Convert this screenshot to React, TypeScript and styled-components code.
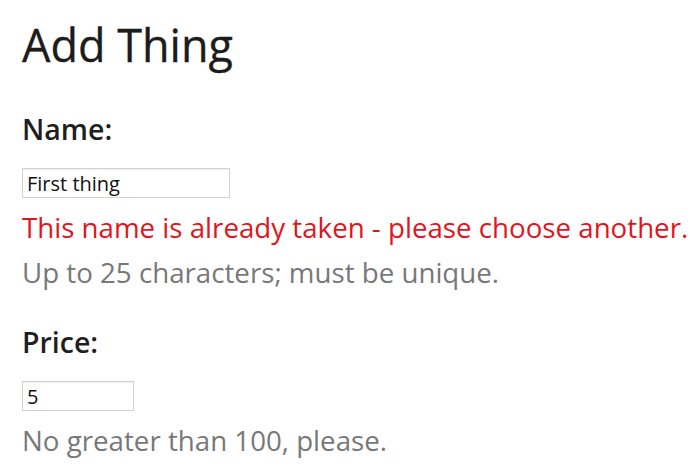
import React, { useState } from 'react'
import styled, { createGlobalStyle } from 'styled-components'

const GlobalStyle = createGlobalStyle`
  html, body {
    margin: 0;
    padding: 0;
    background: #ffffff;
  }
  body {
    font-family: 'Open Sans', 'Noto Sans', sans-serif;
    color: #1f1f1f;
  }
`

const Form = styled.form`
  display: flex;
  flex-direction: column;
  align-items: flex-start;
  padding: 14px 0 0 22px;
`

const Title = styled.h1`
  margin: 0 0 34px;
  font-size: 45px;
  font-weight: 400;
  line-height: 62px;
  color: #1c1c1c;
  -webkit-text-stroke: 0.3px #1c1c1c;
`

const Field = styled.div`
  display: flex;
  flex-direction: column;
  align-items: flex-start;
  margin-bottom: 28px;
`

const Label = styled.label`
  font-size: 28.5px;
  font-weight: 600;
  line-height: 38px;
  margin-bottom: 20px;
  color: #1f1f1f;
`

const Input = styled.input<{ $width: number }>`
  box-sizing: border-box;
  width: ${({ $width }) => $width}px;
  height: 30px;
  margin: 0 0 7px;
  padding: 0 4px;
  border: 1px solid #d2d2d2;
  box-shadow: inset 0 1px 1px rgba(0, 0, 0, 0.06);
  font-family: 'Open Sans', 'Noto Sans', sans-serif;
  font-size: 20px;
  color: #111;
  outline: none;
`

const Message = styled.p<{ $error?: boolean }>`
  margin: 0;
  font-size: 27.7px;
  line-height: 45px;
  color: ${({ $error }) => ($error ? '#e2141c' : '#787878')};
`

export default function App() {
  const [name, setName] = useState('First thing')
  const [price, setPrice] = useState('5')

  return (
    <>
      <GlobalStyle />
      <Form onSubmit={(e) => e.preventDefault()}>
        <Title>Add Thing</Title>
        <Field>
          <Label htmlFor="name">Name:</Label>
          <Input id="name" $width={208} value={name} onChange={(e) => setName(e.target.value)} />
          <Message $error>This name is already taken - please choose another.</Message>
          <Message>Up to 25 characters; must be unique.</Message>
        </Field>
        <Field>
          <Label htmlFor="price">Price:</Label>
          <Input id="price" $width={112} value={price} onChange={(e) => setPrice(e.target.value)} />
          <Message>No greater than 100, please.</Message>
        </Field>
      </Form>
    </>
  )
}
